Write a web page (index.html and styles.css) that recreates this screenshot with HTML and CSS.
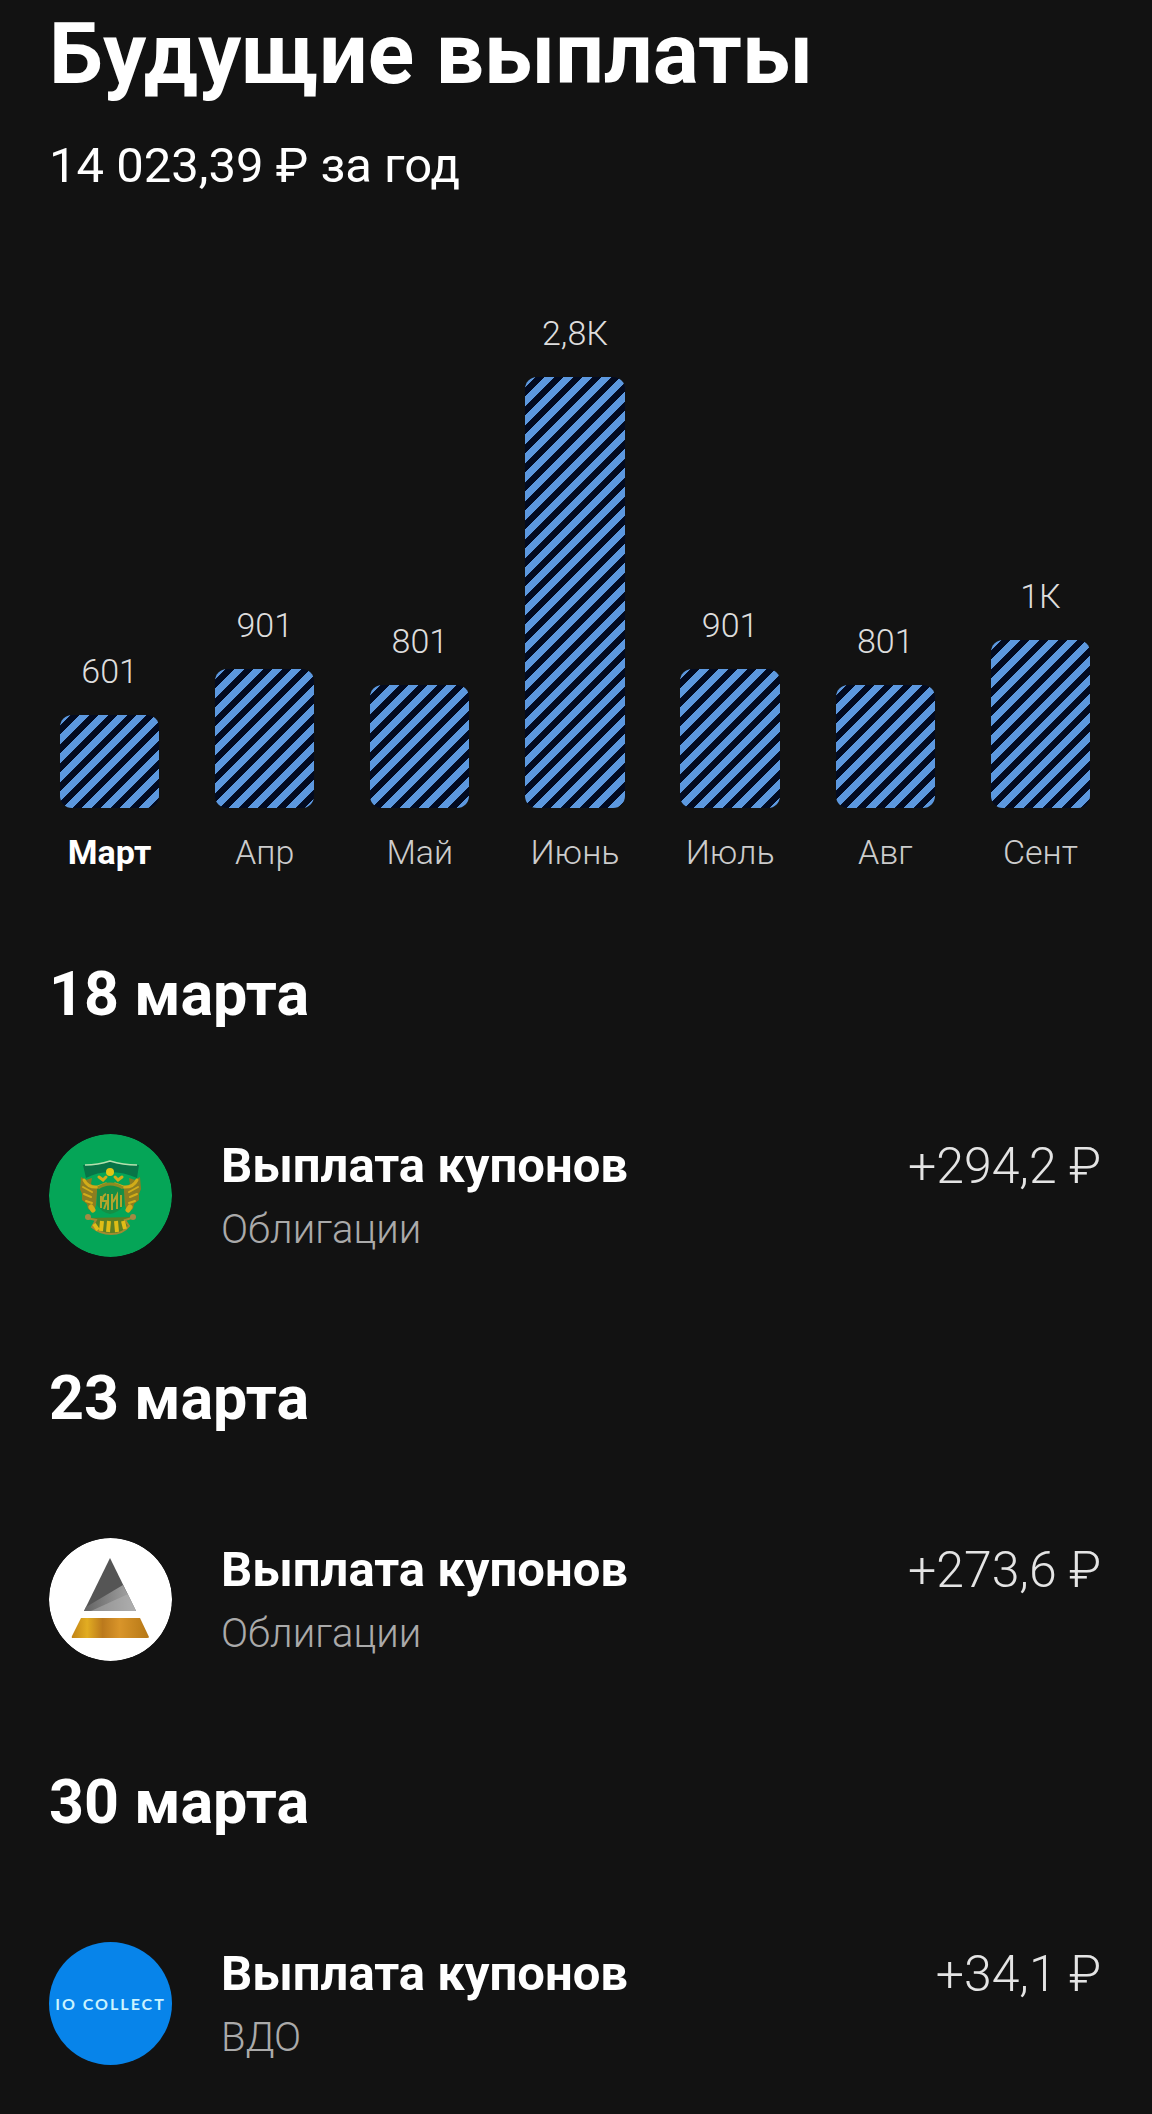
FILE: index.html
```html
<!DOCTYPE html>
<html lang="ru">
<head>
    <meta charset="UTF-8">
    <meta name="viewport" content="width=device-width, initial-scale=1.0">
    <title>Будущие выплаты</title>
    <link rel="stylesheet" href="styles.css">
</head>
<body>
    <header>
        <h1>Будущие выплаты</h1>
        <p class="total">14 023,39 ₽ за год</p>
    </header>

    <main>
        <!-- Выплаты по месяцам -->
        <ul class="chart">
            <li class="month active">
                <span class="value">601</span>
                <div class="bar" style="height: 93px"></div>
                <span class="label">Март</span>
            </li>
            <li class="month">
                <span class="value">901</span>
                <div class="bar" style="height: 139px"></div>
                <span class="label">Апр</span>
            </li>
            <li class="month">
                <span class="value">801</span>
                <div class="bar" style="height: 123px"></div>
                <span class="label">Май</span>
            </li>
            <li class="month">
                <span class="value">2,8К</span>
                <div class="bar" style="height: 431px"></div>
                <span class="label">Июнь</span>
            </li>
            <li class="month">
                <span class="value">901</span>
                <div class="bar" style="height: 139px"></div>
                <span class="label">Июль</span>
            </li>
            <li class="month">
                <span class="value">801</span>
                <div class="bar" style="height: 123px"></div>
                <span class="label">Авг</span>
            </li>
            <li class="month">
                <span class="value">1К</span>
                <div class="bar" style="height: 168px"></div>
                <span class="label">Сент</span>
            </li>
        </ul>

        <section class="day">
            <h2>18 марта</h2>
            <div class="payment">
                <svg class="logo" viewBox="0 0 123 123" aria-hidden="true">
                    <circle cx="61.500" cy="61.500" r="61.500" fill="#05a557"/>
                    <path d="M34 31 Q48 32 61 27 Q75 32 90 31 L88 44 Q75 38 61 38 Q48 38 37 44 Z" fill="#087447"/>
                    <path d="M36 31 Q49 31 61 27 Q74 31 88 31" fill="none" stroke="#b5dfae" stroke-width="1.500"/>
                    <!-- крылья -->
                    <path d="M32 43 L37 46 L43 44 L42 50 L49 54 L57 50 L56 55 L48 58 L47 71 L45 78 L39 75 L38 70 L33 66 L33 60 L31 55 Z" fill="#8d7d20"/>
                    <path d="M91 43 L86 46 L80 44 L81 50 L74 54 L66 50 L67 55 L75 58 L76 71 L78 78 L84 75 L85 70 L90 66 L90 60 L92 55 Z" fill="#8d7d20"/>
                    <g fill="none" stroke="#d2ac18" stroke-width="3" stroke-linecap="round">
                        <path d="M35 46 Q39 54 49 53 L57 50 M88 46 Q84 54 74 53 L66 50"/>
                        <path d="M34 53 L43 58 M35 60 L42 63 M37 67 L43 69 M89 53 L80 58 M88 60 L81 63 M86 67 L80 69" stroke-width="2"/>
                        <path d="M42 73 L44 76 M81 73 L79 76" stroke-width="5"/>
                        <path d="M50 43 L54 46 L57 43 M73 43 L69 46 L66 43"/>
                    </g>
                    <circle cx="61" cy="38" r="4" fill="#e0c614"/>
                    <path d="M48 55 Q61 46 75 55 L75 71 Q69 79 61 80 Q52 78 48 71 Z" fill="#168e45"/>
                    <path d="M49 54 Q61 46 74 54" fill="none" stroke="#8e8b20" stroke-width="3"/>
                    <path d="M52 62 V74 M57 60 Q53 62 54 67 H58 L55 75 M59 60 V76 M63 60 V76 M64 68 L68 61 V75 M72 61 V73" fill="none" stroke="#b1a52c" stroke-width="2"/>
                    <path d="M38 84 L47 86 L43 93 Q51 100 62 100 Q74 100 80 92 L76 86 L86 83" fill="#5d7f24" stroke="#a38a30" stroke-width="2"/>
                    <path d="M45 90 L49 96 M53 87 L52 97 M60 87 L59 98 M67 87 L68 98 M74 87 L76 95" fill="none" stroke="#e0bd16" stroke-width="4"/>
                    <circle cx="39" cy="83" r="3" fill="#a38a43"/>
                    <circle cx="84" cy="83" r="3" fill="#a38a43"/>
                </svg>
                <div class="info">
                    <h3>Выплата купонов</h3>
                    <p>Облигации</p>
                </div>
                <span class="amount">+294,2 ₽</span>
            </div>
        </section>

        <section class="day">
            <h2>23 марта</h2>
            <div class="payment">
                <svg class="logo" viewBox="0 0 123 123" aria-hidden="true">
                    <defs>
                        <linearGradient id="steel" x1="0" y1="0" x2="1" y2="0">
                            <stop offset="0" stop-color="#626262"/>
                            <stop offset="1" stop-color="#aaaaaa"/>
                        </linearGradient>
                        <linearGradient id="gold" x1="0" y1="0" x2="1" y2="0">
                            <stop offset="0" stop-color="#c18317"/>
                            <stop offset="0.200" stop-color="#e2ad22"/>
                            <stop offset="0.400" stop-color="#bb791c"/>
                            <stop offset="0.620" stop-color="#d9952a"/>
                            <stop offset="1" stop-color="#b57716"/>
                        </linearGradient>
                    </defs>
                    <circle cx="61.500" cy="61.500" r="61.500" fill="#fff"/>
                    <path d="M61 20 L87 73 L35 73 Z" fill="#555"/>
                    <path d="M74 47 L87 73 L35 73 L37 69 Z" fill="url(#steel)"/>
                    <path d="M79 56 L87 73 H42 Z" fill="#b4b4b4" opacity="0.500"/>
                    <path d="M32 80 H91 L100 99 Q100 100 98 100 H24 Q22 100 23 98 Z" fill="url(#gold)"/>
                </svg>
                <div class="info">
                    <h3>Выплата купонов</h3>
                    <p>Облигации</p>
                </div>
                <span class="amount">+273,6 ₽</span>
            </div>
        </section>

        <section class="day">
            <h2>30 марта</h2>
            <div class="payment">
                <div class="logo logo-text">IO COLLECT</div>
                <div class="info">
                    <h3>Выплата купонов</h3>
                    <p>ВДО</p>
                </div>
                <span class="amount">+34,1 ₽</span>
            </div>
        </section>
    </main>
</body>
</html>
```
FILE: styles.css
```css
* {
    box-sizing: border-box;
}
body {
    font-family: Roboto, Arial, sans-serif;
    margin: 0;
    background: #121212;
    color: #fff;
}
h1, h2, h3, p {
    margin: 0;
}
header {
    padding: 0 49px;
}
h1 {
    font-size: 86px;
    line-height: 108px;
    font-weight: 700;
}
.total {
    margin-top: 28px;
    font-size: 49px;
    line-height: 60px;
}
.chart {
    display: flex;
    align-items: flex-end;
    list-style: none;
    margin: 117px 0 0;
    padding: 0 34px 0 32px;
}
.month {
    flex: 1;
    display: flex;
    flex-direction: column;
    align-items: center;
    font-size: 34px;
    line-height: 40px;
    font-weight: 300;
}
.value {
    color: #ddd;
}
.bar {
    width: 64%;
    margin: 24px 0;
    border-radius: 12px;
    background: linear-gradient(135deg, #5c98df 28%, #020a20 29% 50%, #5c98df 51% 78%, #020a20 79%);
    background-size: 19px 19px;
}
.label {
    color: #ccc;
}
.active .label {
    color: #fff;
    font-weight: 700;
}
.day {
    padding: 86px 49px 20px;
}
h2 {
    font-size: 61px;
    line-height: 72px;
    font-weight: 700;
}
.payment {
    display: flex;
    gap: 49px;
    margin-top: 104px;
}
.day + .day {
    padding-top: 85px;
}
.logo {
    flex: none;
    width: 123px;
    height: 123px;
    border-radius: 50%;
}
.logo-text {
    display: flex;
    align-items: center;
    justify-content: center;
    background: #0784ea;
    color: #c9f3ff;
    font-family: Lato, sans-serif;
    font-size: 16px;
    font-weight: 700;
    letter-spacing: 2px;
    white-space: nowrap;
}
.info {
    flex: 1;
    padding-top: 2px;
}
h3 {
    font-size: 49px;
    line-height: 60px;
    font-weight: 700;
}
.info p {
    margin-top: 10px;
    color: #aaa;
    font-size: 40px;
    line-height: 48px;
    font-weight: 300;
}
.amount {
    padding: 2px 2px 0 0;
    color: #e4e4e4;
    font-size: 50px;
    line-height: 60px;
    font-weight: 300;
}
```
